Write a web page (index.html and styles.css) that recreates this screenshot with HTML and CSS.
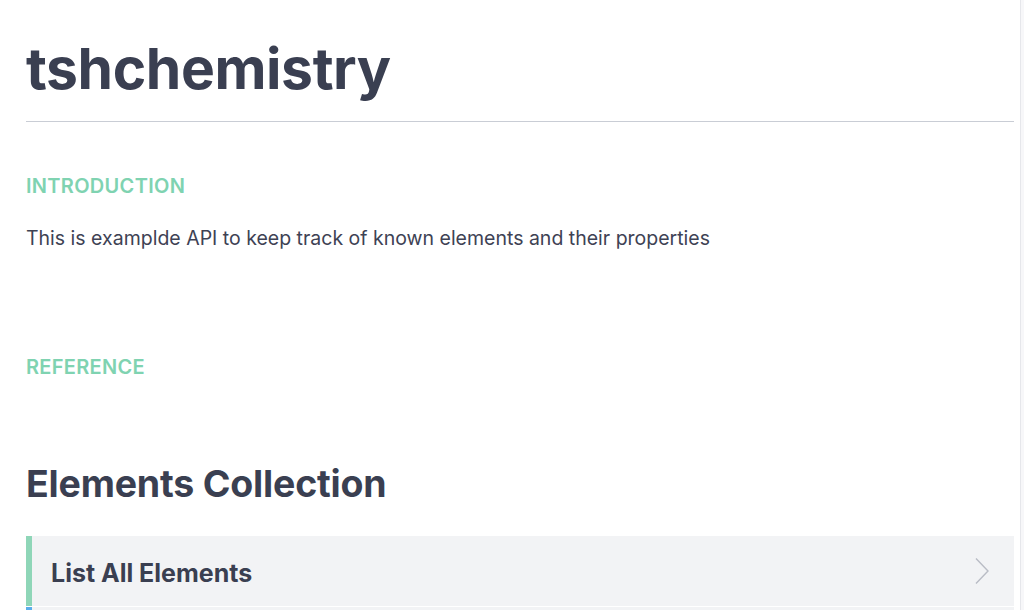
FILE: index.html
```html
<!DOCTYPE html>
<html>
<head>
<meta charset="utf-8">
<link rel="stylesheet" href="styles.css">
</head>
<body>
<div class="page">
  <main class="content">
    <h1 class="title">tshchemistry</h1>
    <section class="intro">
      <h4 class="label">Introduction</h4>
      <p class="desc">This is examplde API to keep track of known elements and their properties</p>
    </section>
    <section class="reference">
      <h4 class="label">Reference</h4>
      <h2 class="group">Elements Collection</h2>
      <div class="action get">
        <span class="action-name">List All Elements</span>
        <svg class="chev" width="16" height="28" viewBox="0 0 16 28"><path d="M2 1.5 L14 14 L2 26.5" fill="none" stroke="#b9bcc5" stroke-width="1.4"/></svg>
      </div>
      <div class="action post"></div>
    </section>
  </main>
  <div class="side"></div>
</div>
</body>
</html>
```
FILE: styles.css
```css
* { box-sizing: border-box; }
html, body { margin: 0; padding: 0; height: 100%; overflow: hidden; }
body { background: #fff; font-family: Inter, "Noto Sans", sans-serif; color: #3b3f51; }
.page { display: flex; height: 100%; }
.content { flex: 1; padding: 0 6px 0 26px; min-width: 0; }
.side { width: 4px; border-left: 1px solid #e6e7eb; background: #f7f7f9; }
.title {
  margin: 0; padding-top: 37px; padding-bottom: 21px;
  font-size: 57px; font-weight: 700; line-height: 63px; letter-spacing: -0.4px;
  color: #3a3f51; border-bottom: 1px solid #c9cdd5;
}
.label {
  margin: 0; font-size: 20px; font-weight: 600; text-transform: uppercase;
  color: #7fd3b1; letter-spacing: 0.3px; line-height: 22px;
}
.intro { padding-top: 53px; }
.desc { margin: 29px 0 0; font-size: 19.5px; line-height: 24px; color: #3e4254; }
.reference { padding-top: 106px; }
.group { margin: 85px 0 0; font-size: 37.5px; font-weight: 700; line-height: 42px; color: #3a3f51; letter-spacing: -0.2px; }
.action {
  display: flex; align-items: center; justify-content: space-between;
  height: 70px; margin-top: 31px; padding: 0 24px 0 19px;
  background: #f2f3f5; border-left: 6px solid #8fd6b8;
}
.action + .action { margin-top: 1px; }
.action.post { border-left-color: #5aaeeb; }
.action-name { font-size: 25px; font-weight: 700; color: #3a3f51; padding-top: 3px; }
.chev { display: block; }
```
